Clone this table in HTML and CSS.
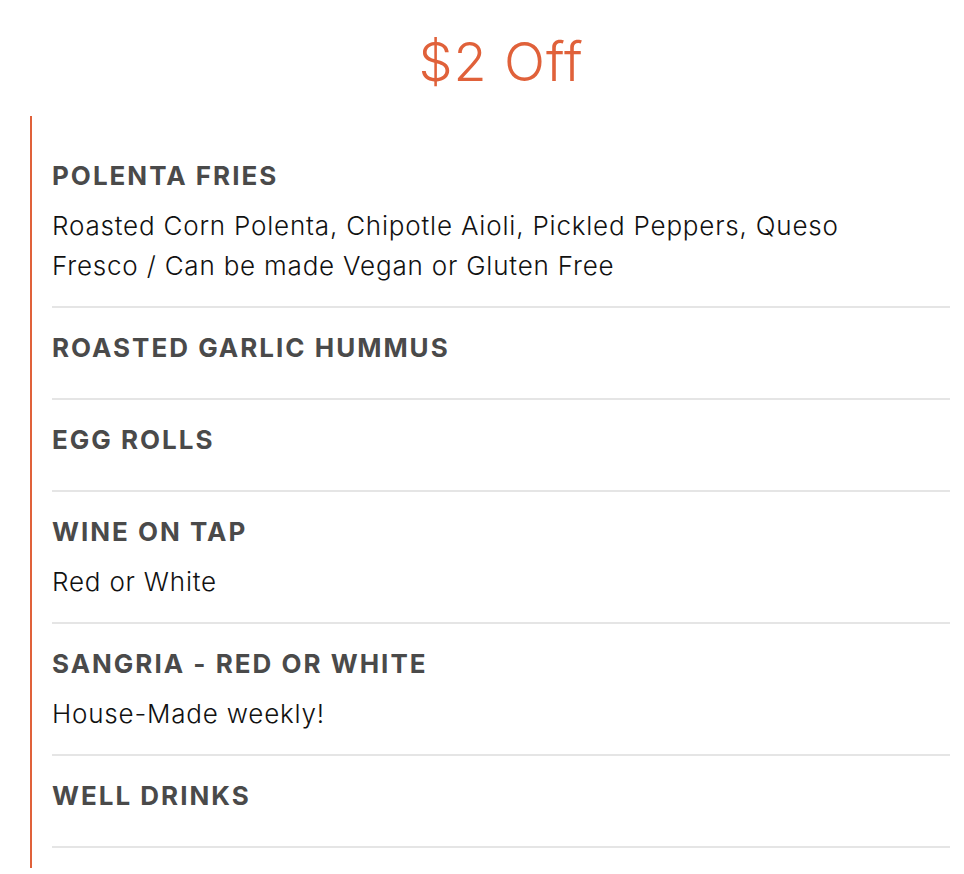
FILE: index.html
```html
<!DOCTYPE html>
<html lang="en">
<head>
<meta charset="utf-8">
<title>$2 Off</title>
<link rel="stylesheet" href="styles.css">
</head>
<body>
<section class="menu">
  <h1 class="menu-title">$2 Off</h1>
  <div class="menu-list">
    <div class="item">
      <h2 class="item-name">POLENTA FRIES</h2>
      <p class="item-desc">Roasted Corn Polenta, Chipotle Aioli, Pickled Peppers, Queso Fresco / Can be made Vegan or Gluten Free</p>
    </div>
    <div class="item">
      <h2 class="item-name">ROASTED GARLIC HUMMUS</h2>
    </div>
    <div class="item">
      <h2 class="item-name">EGG ROLLS</h2>
    </div>
    <div class="item">
      <h2 class="item-name">WINE ON TAP</h2>
      <p class="item-desc">Red or White</p>
    </div>
    <div class="item">
      <h2 class="item-name">SANGRIA - RED OR WHITE</h2>
      <p class="item-desc">House-Made weekly!</p>
    </div>
    <div class="item">
      <h2 class="item-name">WELL DRINKS</h2>
    </div>
  </div>
</section>
</body>
</html>
```
FILE: styles.css
```css
html, body {
  margin: 0;
  padding: 0;
  background: #ffffff;
}
body {
  font-family: Inter, "Noto Sans", "Liberation Sans", sans-serif;
  color: #111111;
}
.menu {
  padding: 0 14px 0 30px;
}
.menu-title {
  margin: 0;
  padding: 30px 0 0 22px;
  height: 116px;
  box-sizing: border-box;
  text-align: center;
  font-size: 54px;
  line-height: 64px;
  font-weight: 300;
  letter-spacing: 1px;
  color: #e0613a;
}
.menu-list {
  border-left: 2px solid #e0613a;
  padding: 20px 0 20px 20px;
}
.item {
  padding: 20px 0;
  border-bottom: 2px solid #e5e5e5;
}
.item-name {
  margin: 0 0 10px;
  font-size: 26px;
  line-height: 40px;
  font-weight: 700;
  letter-spacing: 2px;
  color: #4a4a4a;
}
.item-desc {
  margin: 0;
  font-size: 26px;
  line-height: 40px;
  font-weight: 300;
  letter-spacing: 0.8px;
  color: #111111;
  max-width: 800px;
}
```
